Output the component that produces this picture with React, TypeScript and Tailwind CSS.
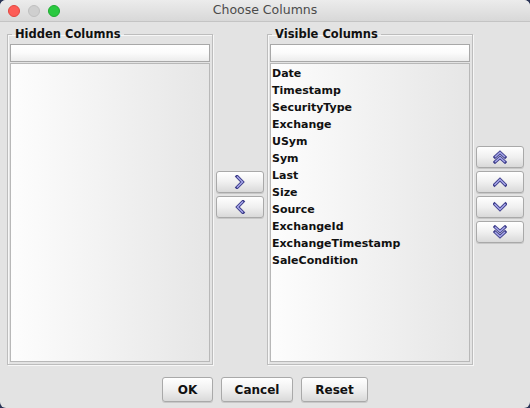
import type { ReactNode } from 'react'

const font = { fontFamily: "'DejaVu Sans', 'Liberation Sans', sans-serif" }

const VISIBLE = [
  'Date',
  'Timestamp',
  'SecurityType',
  'Exchange',
  'USym',
  'Sym',
  'Last',
  'Size',
  'Source',
  'ExchangeId',
  'ExchangeTimestamp',
  'SaleCondition',
]

function Chevron({ dir, double }: { dir: 'up' | 'down' | 'left' | 'right'; double?: boolean }) {
  const rot = { up: 0, right: 90, down: 180, left: 270 }[dir]
  const paths = double ? ['M2 7 L7 2.5 L12 7', 'M2 12 L7 7.5 L12 12'] : ['M1.5 10 L7 4.5 L12.5 10']
  return (
    <svg width="14" height="14" viewBox="0 0 14 14" style={{ transform: `rotate(${rot}deg)` }}>
      {paths.map((d) => (
        <g key={d}>
          <path d={d} fill="none" stroke="#3f3f8c" strokeWidth="3.2" strokeLinejoin="miter" strokeLinecap="square" />
          <path d={d} fill="none" stroke="#a8a8ea" strokeWidth="1.4" strokeLinejoin="miter" />
        </g>
      ))}
    </svg>
  )
}

function Btn({ children, className = '' }: { children: ReactNode; className?: string }) {
  return (
    <button
      className={`flex items-center justify-center border border-[#a9a9a9] rounded-[3px] bg-gradient-to-b from-[#ffffff] via-[#f0f0f0] to-[#d9d9d9] shadow-[0_1px_0_#c8c8c8] ${className}`}
    >
      {children}
    </button>
  )
}

function Panel({ title, items }: { title: string; items: string[] }) {
  return (
    <fieldset className="w-[206px] h-[338px] border border-[#bdbdbd] shadow-[inset_1px_1px_0_#f7f7f7,1px_1px_0_#f7f7f7] px-[2px] pb-[2px] flex flex-col">
      <legend className="ml-[2px] px-[3px] text-[11.5px] leading-[14px] font-bold text-[#111]">{title}</legend>
      <div className="mt-[3px] h-[18px] border border-[#a8a8a8] bg-gradient-to-b from-[#ffffff] via-[#fbfbfb] to-[#ececec]" />
      <div className="mt-[1px] flex-1 border border-[#b8b8b8] bg-gradient-to-r from-[#fdfdfd] to-[#e6e6e6] pt-[1px] pl-[1px]">
        {items.map((it) => (
          <div key={it} className="h-[17px] leading-[17px] text-[11px] font-bold text-[#111]">
            {it}
          </div>
        ))}
      </div>
    </fieldset>
  )
}

export default function App() {
  return (
    <div className="w-[530px] h-[408px] bg-[#2a3456]" style={font}>
      <div className="w-full h-full rounded-[6px] overflow-hidden bg-[#e3e3e3] flex flex-col">
        <div className="h-[22px] relative flex items-center justify-center border-b border-[#c4c4c4] bg-gradient-to-b from-[#ececec] to-[#d8d8d8]">
          <div className="absolute left-[8px] top-[5px] flex gap-[8px]">
            <span className="w-[12px] h-[12px] rounded-full bg-[#fd5d57] border border-[#e1463f]" />
            <span className="w-[12px] h-[12px] rounded-full bg-[#cfcfcf] border border-[#bfbfbf]" />
            <span className="w-[12px] h-[12px] rounded-full bg-[#2ac940] border border-[#1eaa30]" />
          </div>
          <span className="text-[12.5px] text-[#4b4b4b]">Choose Columns</span>
        </div>

        <div className="flex pl-[7px] pt-[5px]">
          <Panel title="Hidden Columns" items={[]} />
          <div className="w-[48px] ml-[3px] flex flex-col gap-[3px] pt-[144px]">
            <Btn className="h-[22px]"><Chevron dir="right" /></Btn>
            <Btn className="h-[22px]"><Chevron dir="left" /></Btn>
          </div>
          <div className="ml-[3px]">
            <Panel title="Visible Columns" items={VISIBLE} />
          </div>
          <div className="w-[48px] ml-[3px] flex flex-col gap-[3px] pt-[119px]">
            <Btn className="h-[22px]"><Chevron dir="up" double /></Btn>
            <Btn className="h-[22px]"><Chevron dir="up" /></Btn>
            <Btn className="h-[22px]"><Chevron dir="down" /></Btn>
            <Btn className="h-[22px]"><Chevron dir="down" double /></Btn>
          </div>
        </div>

        <div className="flex justify-center gap-[8px] mt-[12px]">
          {['OK', 'Cancel', 'Reset'].map((l, i) => (
            <Btn key={l} className={`h-[25px] text-[12px] font-bold text-[#111] ${['w-[51px]', 'w-[72px]', 'w-[67px]'][i]}`}>
              {l}
            </Btn>
          ))}
        </div>
      </div>
    </div>
  )
}
